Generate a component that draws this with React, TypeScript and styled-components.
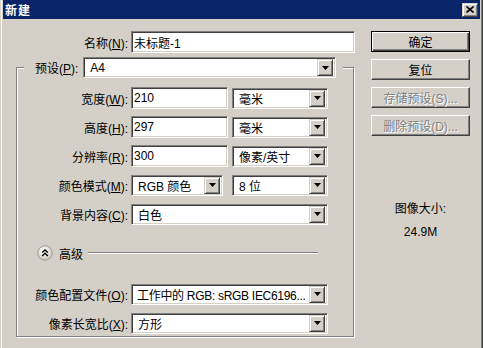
import React from "react";
import styled, { createGlobalStyle } from "styled-components";

const Global = createGlobalStyle`
  html, body { margin: 0; padding: 0; background: #d4d0c8; }
  body {
    font-family: "Liberation Sans", "Noto Sans CJK SC", sans-serif;
    font-size: 12px;
    color: #000;
  }
  * { box-sizing: border-box; }
`;

const Window = styled.div`
  width: 483px;
  height: 348px;
  overflow: hidden;
  background: #d4d0c8;
  padding: 0 3px;
  box-shadow: inset 1px 0 #d4d0c8, inset 2px 0 #fff, inset -1px 0 #404040, inset -2px 0 #808080;
  display: flex;
  flex-direction: column;
`;

const TitleBar = styled.div`
  height: 19px;
  flex: none;
  background: #0a246a;
  display: flex;
  align-items: center;
  justify-content: space-between;
  padding: 0 2px 0 2px;
`;

const Title = styled.span`
  color: #fff;
  font-weight: bold;
  font-size: 12px;
  font-family: "Noto Sans CJK SC", sans-serif;
  letter-spacing: 1px;
`;

const CloseButton = styled.div`
  width: 16px;
  height: 14px;
  background: #d4d0c8;
  border: 1px solid;
  border-color: #d4d0c8 #404040 #404040 #d4d0c8;
  box-shadow: inset 1px 1px #fff, inset -1px -1px #808080;
  display: flex;
  align-items: center;
  justify-content: center;
`;

const Body = styled.div`
  flex: 1;
  display: flex;
  padding: 12px 10px 0 13px;
  gap: 16px;
`;

const Main = styled.div`
  width: 339px;
  display: flex;
  flex-direction: column;
`;

const NameRow = styled.div`
  display: flex;
  align-items: center;
  height: 22px;
`;

const Label = styled.span<{ $w: number }>`
  width: ${(p) => p.$w}px;
  text-align: right;
  margin-right: 3px;
  white-space: nowrap;
`;

const Edit = styled.div<{ $w: number }>`
  width: ${(p) => p.$w}px;
  height: 22px;
  background: #fff;
  border: 1px solid;
  border-color: #808080 #fff #fff #808080;
  box-shadow: inset 1px 1px #404040, inset -1px -1px #d4d0c8;
  display: flex;
  align-items: center;
  padding: 0 2px;
  white-space: nowrap;
`;

const Combo = styled.div<{ $w: number; $ml?: number }>`
  width: ${(p) => p.$w}px;
  margin-left: ${(p) => p.$ml ?? 0}px;
  height: 21px;
  background: #fff;
  border: 1px solid;
  border-color: #808080 #fff #fff #808080;
  box-shadow: inset 1px 1px #404040, inset -1px -1px #d4d0c8;
  display: flex;
  align-items: center;
  padding: 1px 2px 1px 2px;
`;

const ComboText = styled.span<{ $tight?: boolean }>`
  flex: 1;
  min-width: 0;
  padding-left: ${(p) => (p.$tight ? 3 : 4)}px;
  letter-spacing: ${(p) => (p.$tight ? "-0.3px" : "0")};
  white-space: nowrap;
`;

const DropButton = styled.span`
  flex: none;
  width: 16px;
  height: 17px;
  background: #d4d0c8;
  border: 1px solid;
  border-color: #d4d0c8 #404040 #404040 #d4d0c8;
  box-shadow: inset 1px 1px #fff, inset -1px -1px #808080;
  display: flex;
  align-items: center;
  justify-content: center;
`;

const GroupBox = styled.fieldset`
  margin: 4px 0 0 0;
  padding: 0;
  width: 338px;
  min-width: 0;
  border: 1px solid #808080;
  box-shadow: inset 1px 1px #fff, 1px 1px #fff;
`;

const Legend = styled.legend`
  margin-left: 7px;
  padding: 0 7px 0 11px;
  background: #d4d0c8;
`;

const LegendInner = styled.div`
  display: flex;
  align-items: center;
  gap: 5px;
`;

const Rows = styled.div`
  display: flex;
  flex-direction: column;
  padding: 9px 0 2px 0;
`;

const Row = styled.div<{ $mt: number }>`
  display: flex;
  align-items: center;
  height: 22px;
  margin-top: ${(p) => p.$mt}px;
`;

const AdvancedRow = styled.div`
  display: flex;
  align-items: center;
  height: 16px;
  margin-top: 20px;
  padding: 0 35px 0 20px;
`;

const AdvancedText = styled.span`
  margin-left: 6px;
  margin-right: 5px;
`;

const EtchedLine = styled.div`
  flex: 1;
  height: 2px;
  border-top: 1px solid #808080;
  border-bottom: 1px solid #fff;
`;

const Side = styled.div`
  width: 99px;
  display: flex;
  flex-direction: column;
  gap: 7px;
`;

const Button = styled.div<{ $default?: boolean; $disabled?: boolean }>`
  height: 21px;
  display: flex;
  align-items: center;
  justify-content: center;
  background: #d4d0c8;
  border: 1px solid;
  border-color: ${(p) => (p.$default ? "#000" : "#fff #404040 #404040 #fff")};
  box-shadow: ${(p) =>
    p.$default
      ? "inset 1px 1px #fff, inset -1px -1px #404040, inset -2px -2px #808080"
      : "inset -1px -1px #808080, inset 1px 1px #d4d0c8"};
  color: ${(p) => (p.$disabled ? "#808080" : "#000")};
  text-shadow: ${(p) => (p.$disabled ? "1px 1px #fff" : "none")};
  white-space: nowrap;
`;

const SizeInfo = styled.div`
  margin-top: 59px;
  display: flex;
  flex-direction: column;
  align-items: center;
  gap: 9px;
  line-height: 14px;
`;

const Arrow = () => (
  <svg width="7" height="4" viewBox="0 0 7 4">
    <path d="M0 0h7L3.5 4z" fill="#000" />
  </svg>
);

const Drop = ({
  w,
  ml,
  tight,
  children,
}: {
  w: number;
  ml?: number;
  tight?: boolean;
  children?: React.ReactNode;
}) => (
  <Combo $w={w} $ml={ml}>
    <ComboText $tight={tight}>{children}</ComboText>
    <DropButton>
      <Arrow />
    </DropButton>
  </Combo>
);

const CollapseIcon = () => (
  <svg width="16" height="16" viewBox="0 0 16 16">
    <defs>
      <radialGradient id="cg" cx="0.4" cy="0.35" r="0.7">
        <stop offset="0" stopColor="#ffffff" />
        <stop offset="1" stopColor="#c8c4bc" />
      </radialGradient>
    </defs>
    <circle cx="8" cy="8" r="7.2" fill="url(#cg)" stroke="#9a968e" strokeWidth="0.9" />
    <path d="M5.2 7.6L8 4.9l2.8 2.7M5.2 11L8 8.3l2.8 2.7" fill="none" stroke="#000" strokeWidth="1.4" />
  </svg>
);

export default function App() {
  return (
    <>
      <Global />
      <Window>
        <TitleBar>
          <Title>新建</Title>
          <CloseButton>
            <svg width="8" height="7" viewBox="0 0 8 7">
              <path d="M0.5 0.5l7 6M7.5 0.5l-7 6" stroke="#000" strokeWidth="1.6" />
            </svg>
          </CloseButton>
        </TitleBar>
        <Body>
          <Main>
            <NameRow>
              <Label $w={112}>
                名称(<u>N</u>):
              </Label>
              <Edit $w={224}>未标题-1</Edit>
            </NameRow>
            <GroupBox>
              <Legend>
                <LegendInner>
                  <span>
                    预设(<u>P</u>):
                  </span>
                  <Drop w={253}>A4</Drop>
                </LegendInner>
              </Legend>
              <Rows>
                <Row $mt={0}>
                  <Label $w={111}>
                    宽度(<u>W</u>):
                  </Label>
                  <Edit $w={97}>210</Edit>
                  <Drop w={96} ml={4}>毫米</Drop>
                </Row>
                <Row $mt={7}>
                  <Label $w={111}>
                    高度(<u>H</u>):
                  </Label>
                  <Edit $w={97}>297</Edit>
                  <Drop w={96} ml={4}>毫米</Drop>
                </Row>
                <Row $mt={7}>
                  <Label $w={111}>
                    分辨率(<u>R</u>):
                  </Label>
                  <Edit $w={97}>300</Edit>
                  <Drop w={96} ml={4}>像素/英寸</Drop>
                </Row>
                <Row $mt={7}>
                  <Label $w={111}>
                    颜色模式(<u>M</u>):
                  </Label>
                  <Drop w={92}>RGB 颜色</Drop>
                  <Drop w={96} ml={9}>8 位</Drop>
                </Row>
                <Row $mt={7}>
                  <Label $w={111}>
                    背景内容(<u>C</u>):
                  </Label>
                  <Drop w={197}>白色</Drop>
                </Row>
                <AdvancedRow>
                  <CollapseIcon />
                  <AdvancedText>高级</AdvancedText>
                  <EtchedLine />
                </AdvancedRow>
                <Row $mt={22}>
                  <Label $w={111}>
                    颜色配置文件(<u>O</u>):
                  </Label>
                  <Drop w={197} tight>
                    工作中的 RGB: sRGB IEC6196...
                  </Drop>
                </Row>
                <Row $mt={7}>
                  <Label $w={111}>
                    像素长宽比(<u>X</u>):
                  </Label>
                  <Drop w={197}>方形</Drop>
                </Row>
              </Rows>
            </GroupBox>
          </Main>
          <Side>
            <Button $default>确定</Button>
            <Button>复位</Button>
            <Button $disabled>存储预设(S)...</Button>
            <Button $disabled>删除预设(D)...</Button>
            <SizeInfo>
              <span>图像大小:</span>
              <span>24.9M</span>
            </SizeInfo>
          </Side>
        </Body>
      </Window>
    </>
  );
}
